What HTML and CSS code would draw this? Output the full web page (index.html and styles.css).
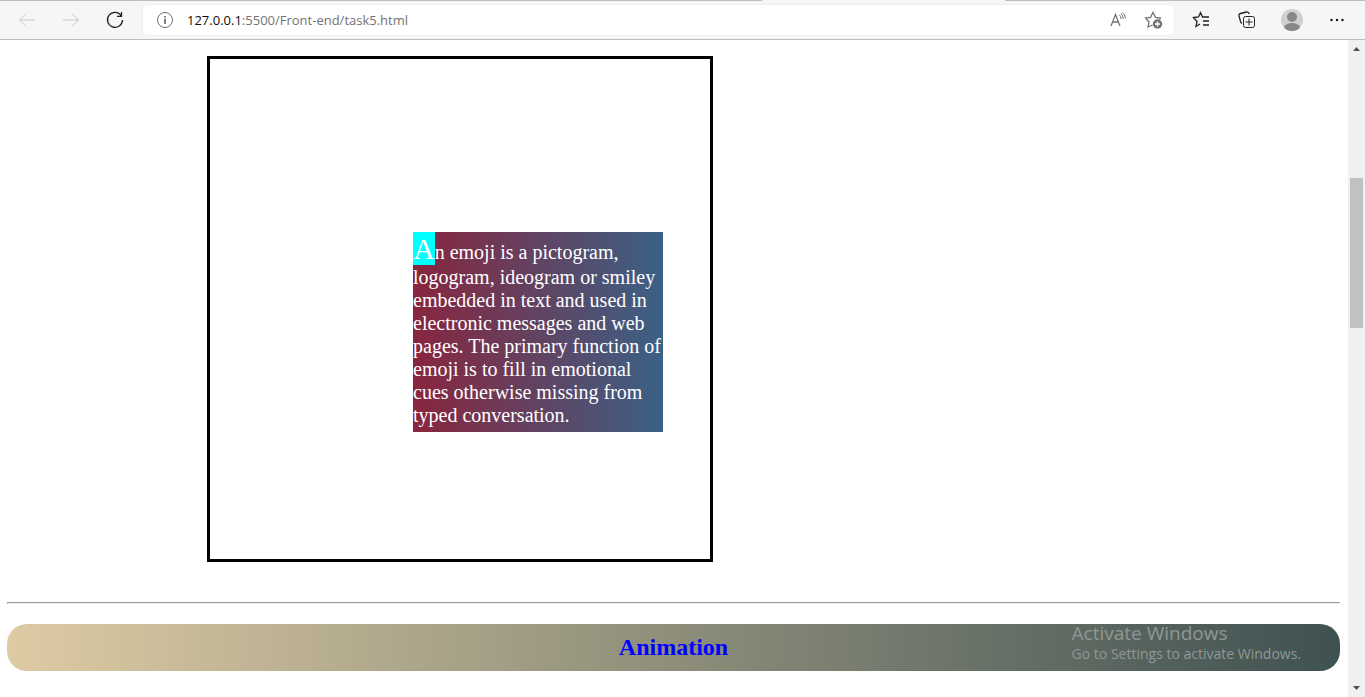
FILE: index.html
```html
<!DOCTYPE html>
<html lang="en">
<head>
<meta charset="utf-8">
<title>task5</title>
<link rel="stylesheet" href="styles.css">
</head>
<body>
<header class="toolbar">
  <div class="tab-edge"><span class="edge-left"></span><span class="edge-right"></span></div>
  <nav class="nav-buttons">
    <button class="icon-button muted" aria-label="Back"><svg width="18" height="16" viewBox="0 0 18 16"><path d="M17 8H1.500M8 1.500L1.500 8L8 14.500"/></svg></button>
    <button class="icon-button muted" aria-label="Forward"><svg width="18" height="16" viewBox="0 0 18 16"><path d="M1 8H16.500M10 1.500L16.500 8L10 14.500"/></svg></button>
    <button class="icon-button" aria-label="Refresh"><svg width="18" height="18" viewBox="0 0 18 18"><path class="bold" d="M15.300 4.800A7.500 7.500 0 1 0 16.500 9M15.500 1V5.300H11"/></svg></button>
  </nav>
  <div class="address">
    <button class="icon-button gray" aria-label="Site information"><svg width="18" height="18" viewBox="0 0 18 18"><circle cx="9" cy="9" r="7.500"/><path class="thick" d="M9 7.800V13M9 5V6.500"/></svg></button>
    <a class="url" href="#"><span class="host">127.0.0.1</span>:5500/Front-end/task5.html</a>
    <button class="icon-button gray" aria-label="Read aloud"><svg width="18" height="18" viewBox="0 0 18 18"><path class="bold" d="M2 15L6.500 3.500L11 15M3.500 11H9.500"/><path d="M10.500 4Q12 5.500 12 8M12 2.500Q14.200 4.500 14.200 8M13.500 1.500Q16.500 3.500 16.500 7.500"/></svg></button>
    <button class="icon-button gray" aria-label="Add to favorites"><svg width="20" height="20" viewBox="0 0 20 20"><path class="bold" d="M8.500 15L4 17L5 12L1.500 8L6.500 7.300L9 2.500L11.500 7.300L16.500 8L15.500 9.500"/><circle class="solid" cx="13.500" cy="14" r="4.700"/><path class="plus" d="M11 14H16M13.500 11.500V16.500"/></svg></button>
  </div>
  <nav class="actions">
    <button class="icon-button" aria-label="Favorites"><svg width="20" height="20" viewBox="0 0 20 20"><path class="bold" d="M8 14L4 16.500L5 11.500L1.500 7.500L6.500 7L8.500 2.500L10.500 7H17M11 11H17M11 15H17"/></svg></button>
    <button class="icon-button" aria-label="Collections"><svg width="20" height="20" viewBox="0 0 20 20"><path class="bold" d="M5 13.500L3.800 12.500L2 6Q1.500 4 3.500 3.500L9.500 2Q11.500 1.500 12.200 4"/><rect x="6.500" y="6.500" width="11" height="11" rx="2"/><path d="M12 8.500V15.500M8.500 12H15.500"/></svg></button>
    <button class="icon-button" aria-label="Profile"><svg width="24" height="24" viewBox="0 0 24 24"><defs><clipPath id="avatar"><circle cx="12" cy="12" r="11"/></clipPath></defs><circle class="avatar-back" cx="12" cy="12" r="11"/><g clip-path="url(#avatar)"><circle class="avatar-person" cx="12" cy="9" r="5"/><ellipse class="avatar-person" cx="12" cy="20" rx="8" ry="5"/></g></svg></button>
    <button class="icon-button" aria-label="Settings and more"><svg width="18" height="18" viewBox="0 0 18 18"><g class="dots"><circle cx="3.500" cy="9" r="1.200"/><circle cx="9" cy="9" r="1.200"/><circle cx="14.500" cy="9" r="1.200"/></g></svg></button>
  </nav>
</header>
<div class="viewport">
  <main class="page">
    <section class="frame">
      <p class="emoji">An emoji is a pictogram, logogram, ideogram or smiley embedded in text and used in electronic messages and web pages. The primary function of emoji is to fill in emotional cues otherwise missing from typed conversation.</p>
    </section>
    <hr class="divider">
    <h2 class="banner">Animation</h2>
  </main>
  <div class="scrollbar">
    <svg width="9" height="5" viewBox="0 0 9 5"><path d="M1 5L4.500 1L8 5Z"/></svg>
    <div class="track"><div class="thumb"></div></div>
    <svg width="9" height="5" viewBox="0 0 9 5"><path d="M1 0L4.500 4L8 0Z"/></svg>
  </div>
</div>
<aside class="watermark">
  <div class="watermark-title">Activate Windows</div>
  <div class="watermark-text">Go to Settings to activate Windows.</div>
</aside>
</body>
</html>
```
FILE: styles.css
```css
* { box-sizing: border-box; }
body {
  margin: 0;
  height: 100vh;
  display: flex;
  flex-direction: column;
  overflow: hidden;
  background: #fff;
  font-family: "Liberation Serif", "Times New Roman", serif;
}
.toolbar {
  position: relative;
  flex: none;
  height: 40px;
  display: flex;
  align-items: center;
  background: #f6f6f6;
  border-bottom: 1px solid #bdbdbd;
}
.tab-edge {
  position: absolute;
  inset: 0 0 auto;
  display: flex;
  justify-content: space-between;
  height: 1px;
}
.edge-left { width: 762px; background: #bdbdbd; }
.edge-right { width: 360px; background: #bdbdbd; }
.icon-button {
  flex: none;
  width: 24px;
  height: 24px;
  display: flex;
  align-items: center;
  justify-content: center;
  padding: 0;
  border: 0;
  background: none;
  color: #222;
}
.icon-button svg { fill: none; stroke: currentColor; stroke-width: 1; }
.icon-button .bold { stroke-width: 1.3; }
.icon-button .thick { stroke-width: 1.8; }
.icon-button .solid { fill: currentColor; stroke: none; }
.icon-button .plus { stroke: #fff; stroke-width: 1.4; }
.icon-button .dots { fill: #111; stroke: none; }
.icon-button.muted { color: #c8c8c8; }
.icon-button.gray { color: #737373; }
.icon-button .avatar-back { fill: #d2d0ce; stroke: none; }
.icon-button .avatar-person { fill: #8a8886; stroke: none; }
.nav-buttons { display: flex; gap: 20px; padding: 0 16px 0 15px; }
.address {
  flex: 1;
  height: 30px;
  display: flex;
  align-items: center;
  gap: 12px;
  padding: 0 8px 0 10px;
  border-radius: 4px;
  background: #fff;
  box-shadow: 0 0 2px #dedede;
}
.url {
  flex: 1;
  margin-left: -2px;
  color: #737373;
  font: 13px/20px "Open Sans", "Noto Sans", sans-serif;
  text-decoration: none;
}
.host { color: #111; }
.actions { display: flex; gap: 21px; padding: 0 16px; }
.viewport { flex: 1; min-height: 0; display: flex; }
.page { flex: 1; min-width: 0; overflow: hidden; padding: 16px 8px 0 7px; }
.frame {
  width: 506px;
  height: 506px;
  margin-left: 200px;
  padding: 173px 0 0 203px;
  border: 3px solid #000;
}
.emoji {
  width: 250px;
  height: 200px;
  margin: 0;
  color: #fff;
  font-size: 20px;
  background: linear-gradient(to right, #89253e, #3a6186);
}
.emoji::first-letter { font-size: 30px; background: cyan; }
.divider {
  margin: 40px 0 20px;
  border: 1px solid;
  border-color: #9a9a9a #eee #eee #9a9a9a;
}
.banner {
  margin: 0;
  padding: 10px;
  border-radius: 20px;
  color: #00f;
  font-size: 24px;
  line-height: 27px;
  text-align: center;
  background: linear-gradient(to right, #decba4, #3e5151);
}
.scrollbar {
  flex: none;
  width: 17px;
  display: flex;
  flex-direction: column;
  align-items: center;
  padding: 6px 0;
  background: #f0f0f0;
}
.scrollbar svg { fill: #505050; }
.track { flex: 1; align-self: stretch; padding: 127px 2px 0; }
.thumb { height: 150px; background: #c1c1c1; }
.watermark {
  position: absolute;
  right: 64px;
  bottom: 33px;
  color: #909794;
  font-family: "Open Sans", "Noto Sans", sans-serif;
}
.watermark-title { font-size: 19px; line-height: 22px; }
.watermark-text { font-size: 14px; line-height: 20px; }
```
